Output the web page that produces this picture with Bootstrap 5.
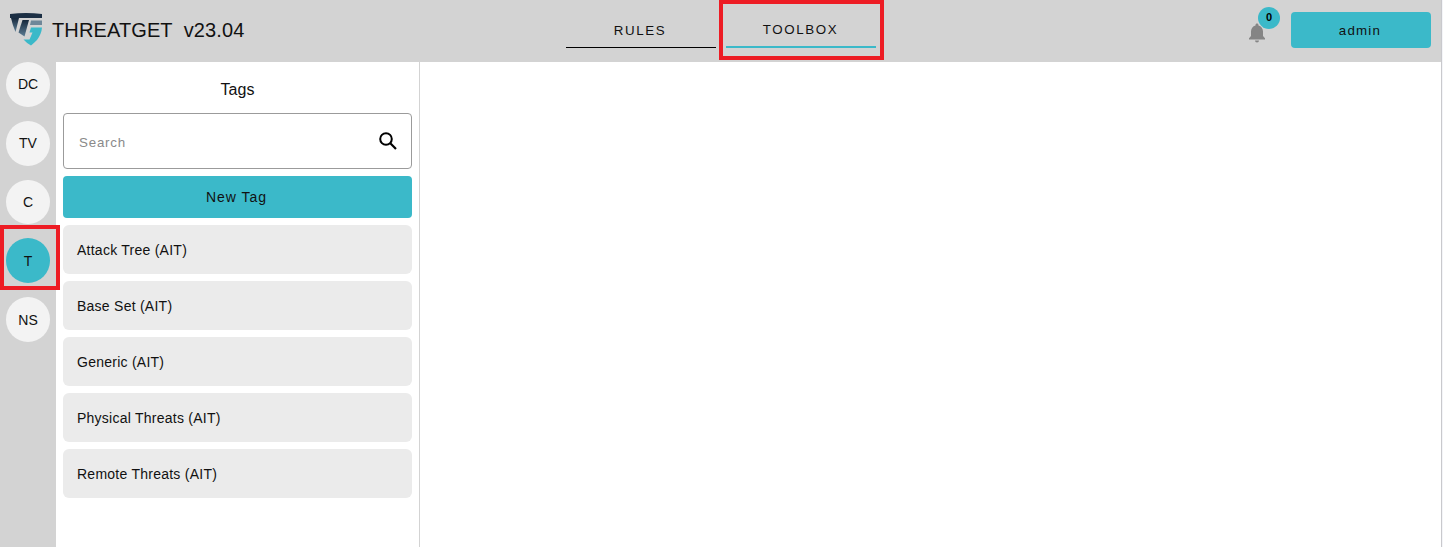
<!DOCTYPE html>
<html lang="en">
<head>
  <meta charset="UTF-8" />
  <meta name="viewport" content="width=device-width, initial-scale=1.0"/>
  <title>ThreatGet - Toolbox</title>
  <link href="https://cdn.jsdelivr.net/npm/bootstrap@5.3.0/dist/css/bootstrap.min.css" rel="stylesheet"/>
  <style>
    html, body { height: 100%; }
    body { background: #fff; font-family: "Liberation Sans", Arial, sans-serif; color: #000; overflow: hidden; }
    .app-shell { width: 1441px; height: 547px; background: #d3d3d3; position: relative; }
    .top-bar { height: 62px; padding: 0 10px; position: relative; }
    .brand-logo { width: 33px; height: 33px; margin: 0 9px 3px 0; }
    .brand-text { font-size: 20px; line-height: 24px; white-space: pre; color: #111; letter-spacing: .12px; margin-bottom: 2px; }
    .tab-strip { position: absolute; left: 566px; top: 13px; gap: 10px; }
    .tab-item { width: 150px; height: 35px; text-align: center; font-size: 13.33px; letter-spacing: 1.6px; line-height: 35px; color: #111; border-bottom: 1px solid #000; background: none; padding-right: 2px; }
    .tab-item.is-active { border-bottom: 2px solid #3bb9c9; line-height: 33px; padding-right: 1px; }
    .bell-wrap { position: absolute; left: 1247px; top: 20px; width: 20px; height: 20px; }
    .bell-badge { position: absolute; left: 11px; top: -13px; width: 22px; height: 22px; border-radius: 50%; background: #3bb9c9; font-size: 11px; font-weight: 700; line-height: 20px; text-align: center; }
    .admin-btn { position: absolute; left: 1291px; top: 12px; width: 140px; height: 36px; background: #3bb9c9; border: 0; border-radius: 4px; font-size: 13.33px; letter-spacing: 1.2px; color: #111; padding: 1px 2px 0 0; }
    .main-row { height: 485px; }
    .side-rail { width: 56px; padding: 0 6px; }
    .rail-dot { width: 44px; height: 44.75px; border-radius: 50%; background: #f3f3f3; font-size: 14px; color: #111; margin-bottom: 14px; padding-top: 1px; }
    .rail-dot.is-active { background: #3bb9c9; }
    .rail-dot.is-last { padding-top: 2px; }
    .tag-panel { width: 364px; background: #fff; border-right: 1px solid #d3d3d3; padding: 0 7px; }
    .panel-title { font-size: 16px; text-align: center; line-height: 20px; padding-top: 18px; margin-bottom: 13px; color: #111; }
    .search-box { height: 56px; border: 1px solid #9b9b9b; border-radius: 4px; padding: 0 13px 0 15px; margin-bottom: 7px; }
    .search-box input { border: 0; outline: 0; flex: 1; min-width: 0; font-size: 13.33px; letter-spacing: .8px; background: none; padding: 3px 0 0; }
    .search-box input::placeholder { color: #8a8a8a; opacity: 1; }
    .new-tag-btn { width: 100%; height: 42px; background: #3bb9c9; border: 0; border-radius: 4px; font-size: 14px; letter-spacing: 1px; color: #111; padding: 0 2px 0 0; margin-bottom: 7px; }
    .tag-row { height: 49px; background: #ebebeb; border-radius: 6px; padding: 2px 14px 0; margin-bottom: 7px; font-size: 14px; letter-spacing: .25px; color: #111; }
    .work-area { flex: 1; background: #fff; }
    .page-edge { position: absolute; left: 1441px; top: 0; width: 2px; height: 547px; background: #f4f5f8; border-left: 1px solid #c9c9cd; }
    .red-box { position: absolute; border: 4px solid #ed1c24; pointer-events: none; }
    .red-box.for-tab { left: 719px; top: 0; width: 165px; height: 60px; }
    .red-box.for-rail { left: 0; top: 225px; width: 60px; height: 65px; }
  </style>
</head>
<body>
  <div class="app-shell">
    <header class="top-bar d-flex align-items-center">
      <svg class="brand-logo" viewBox="0 0 33 33" aria-hidden="true">
        <defs>
          <linearGradient id="shieldDark" x1="0" y1="0" x2="0" y2="1">
            <stop offset="0" stop-color="#16283c"/>
            <stop offset="1" stop-color="#5d7d94"/>
          </linearGradient>
        </defs>
        <path d="M0 1 Q16 -1 32 1 V5 H0Z" fill="#1c2f44"/>
        <path d="M1 5 H9 L5.500 19 Q2.500 12 1 5Z" fill="url(#shieldDark)"/>
        <path d="M12.500 7 H19 L14.500 23.500 L8.500 19.500Z" fill="url(#shieldDark)"/>
        <path d="M21 7.500 H32 V12 H20Z" fill="#6f8799"/>
        <path d="M21 14.500 H32 Q31.500 21 27 27 Q24 30 21 32.500 Q17 30.500 13.500 26.500 L19.500 26.500 L22.500 19.500 H19.500Z" fill="#3bb9c9"/>
      </svg>
      <span class="brand-text">THREATGET  v23.04</span>
      <nav class="tab-strip d-flex">
        <div class="tab-item">RULES</div>
        <div class="tab-item is-active">TOOLBOX</div>
      </nav>
      <div class="bell-wrap">
        <svg width="20" height="20" viewBox="0 0 20 20" aria-hidden="true">
          <path d="M10 0.500c-.9 0-1.500.6-1.500 1.500v.4C5.700 3.100 4 5.500 4 8.500V13l-2 2.200V16.500h16v-1.300L16 13V8.500c0-3-1.700-5.400-4.500-6.100V2c0-.9-.6-1.500-1.500-1.500z" fill="#858585"/>
          <path d="M8 17.500h4a2 2 0 0 1-4 0z" fill="#858585"/>
        </svg>
        <span class="bell-badge">0</span>
      </div>
      <button class="admin-btn" type="button">admin</button>
    </header>

    <div class="main-row d-flex">
      <aside class="side-rail">
        <div class="rail-dot d-flex align-items-center justify-content-center">DC</div>
        <div class="rail-dot d-flex align-items-center justify-content-center">TV</div>
        <div class="rail-dot d-flex align-items-center justify-content-center">C</div>
        <div class="rail-dot is-active d-flex align-items-center justify-content-center">T</div>
        <div class="rail-dot is-last d-flex align-items-center justify-content-center">NS</div>
      </aside>
      <section class="tag-panel">
        <div class="panel-title">Tags</div>
        <div class="search-box d-flex align-items-center">
          <input type="text" placeholder="Search">
          <svg width="20" height="20" viewBox="0 0 20 20" aria-hidden="true">
            <circle cx="8" cy="8" r="5.800" fill="none" stroke="#000" stroke-width="2"/>
            <path d="M12.300 12.300 L18 18" stroke="#000" stroke-width="2.200" fill="none"/>
          </svg>
        </div>
        <button class="new-tag-btn" type="button">New Tag</button>
        <div class="tag-row d-flex align-items-center">Attack Tree (AIT)</div>
        <div class="tag-row d-flex align-items-center">Base Set (AIT)</div>
        <div class="tag-row d-flex align-items-center">Generic (AIT)</div>
        <div class="tag-row d-flex align-items-center">Physical Threats (AIT)</div>
        <div class="tag-row d-flex align-items-center">Remote Threats (AIT)</div>
      </section>
      <main class="work-area"></main>
    </div>

    <div class="red-box for-tab"></div>
    <div class="red-box for-rail"></div>
  </div>
  <div class="page-edge"></div>
  <script src="https://cdn.jsdelivr.net/npm/bootstrap@5.3.0/dist/js/bootstrap.bundle.min.js"></script>
</body>
</html>
